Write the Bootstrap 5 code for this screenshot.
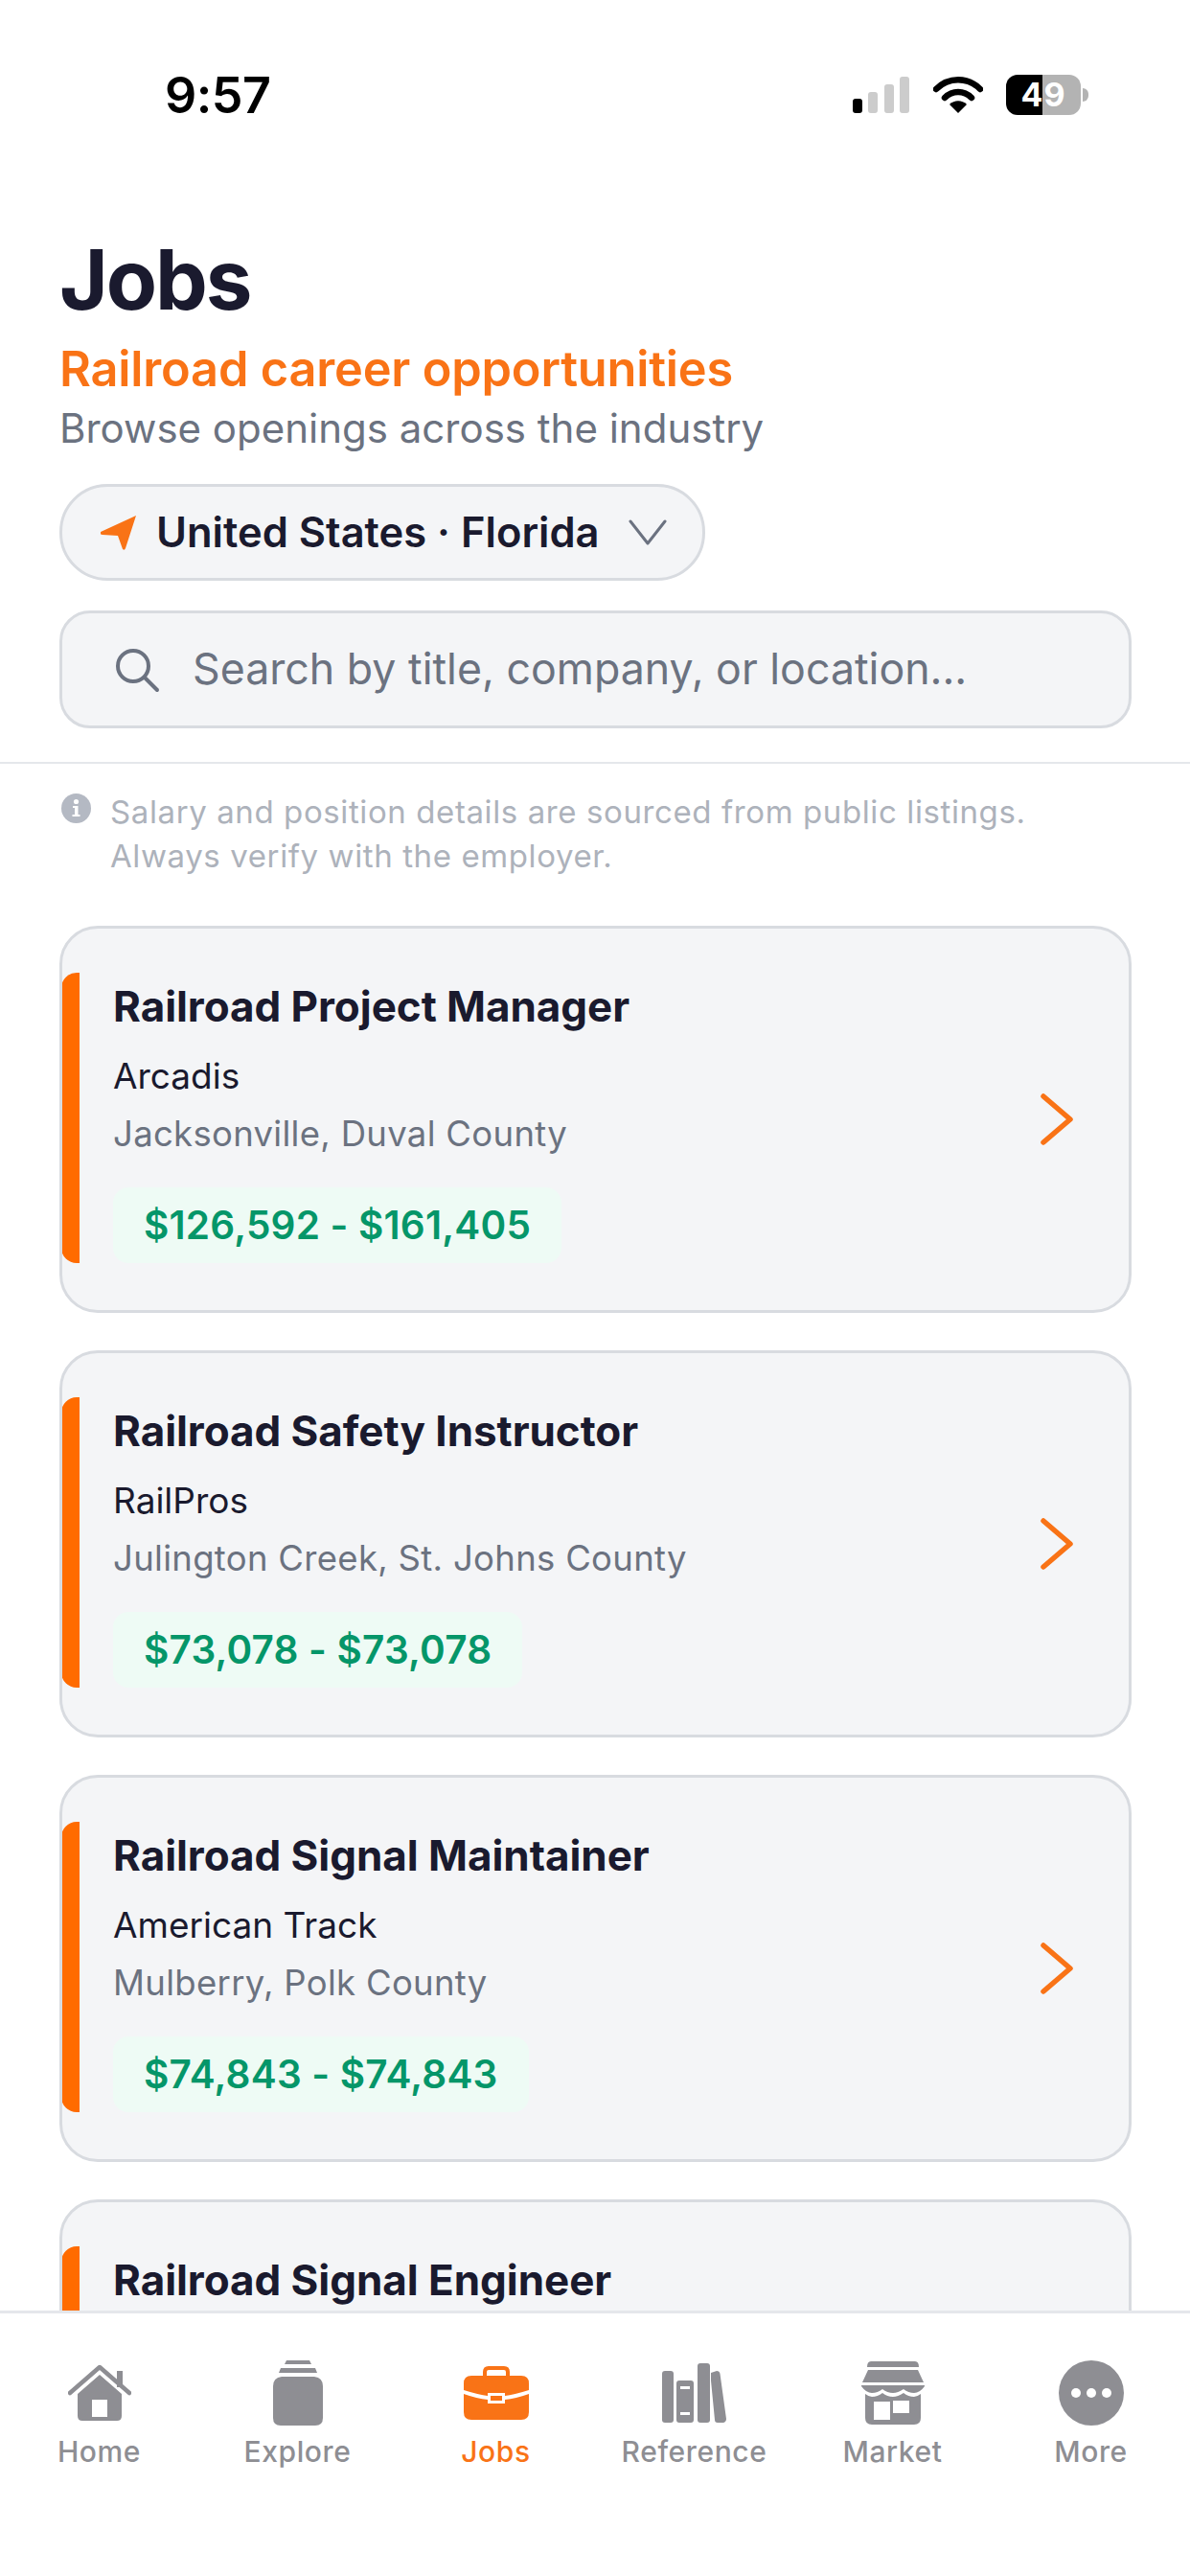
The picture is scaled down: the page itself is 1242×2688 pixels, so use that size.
<!DOCTYPE html>
<html lang="en">
<head>
  <meta charset="UTF-8" />
  <meta name="viewport" content="width=device-width, initial-scale=1.0"/>
  <title>Jobs</title>
  <link href="https://cdn.jsdelivr.net/npm/bootstrap@5.3.0/dist/css/bootstrap.min.css" rel="stylesheet">
  <style>
    body {
      background-color: #fff;
      font-family: Inter, "Liberation Sans", sans-serif;
      color: #1a1a2e;
    }
    .app-screen { width: 1242px; height: 2688px; overflow: hidden; }
    /* status bar */
    .status-row { height: 242px; padding: 72px 106px 0 172px; }
    .status-time { font-size: 52px; font-weight: 600; line-height: 56px; color: #000; letter-spacing: -0.5px; }
    .status-icons { margin-top: 6px; }
    .battery-box {
      width: 78px; height: 42px; border-radius: 12px;
      background: linear-gradient(90deg, #000 0 38px, #b3b3b3 38px 100%);
      color: #fff; font-size: 34px; font-weight: 700; line-height: 42px; text-align: center; letter-spacing: 1px;
    }
    .battery-nub { width: 6px; height: 14px; background: #b3b3b3; border-radius: 0 6px 6px 0; margin-left: 2px; }
    /* header */
    .page-head { padding: 0 61px 0 62px; border-bottom: 2px solid #e5e7eb; height: 555px; flex: none; }
    .head-title { font-size: 87px; font-weight: 700; line-height: 100px; letter-spacing: -2.1px; margin: 0; color: #1a1a2e; }
    .head-orange { font-size: 50.5px; font-weight: 600; line-height: 60px; color: #f97316; margin-top: 13px; letter-spacing: -0.2px; }
    .head-grey { font-size: 42px; line-height: 60px; color: #6b7280; margin-top: 2px; }
    .region-pill {
      width: 674px; height: 101px; margin-top: 28px; border: 3px solid #d8dbe0; border-radius: 50px;
      background: #f4f5f7; padding: 0 37px 0 40px; font-size: 43.5px; font-weight: 600; color: #1a1a2e;
    }
    .region-label { margin-left: 20px; }
    .search-box {
      height: 123px; margin-top: 31px; border: 3px solid #d8dbe0; border-radius: 32px;
      background: #f4f5f7; padding: 0 0 0 54px;
    }
    .search-input {
      background: transparent; border: 0; padding: 0; margin-left: 34px; font-size: 44.7px; color: #1a1a2e; box-shadow: none !important;
    }
    .search-input::placeholder { color: #6b7280; opacity: 1; }
    /* notice */
    .notice-row { padding: 27px 61px 0 64px; height: 169px; flex: none; font-size: 33px; line-height: 46px; color: #adb2bb; letter-spacing: 0.6px; }
    .notice-text { margin-left: 4px; }
    /* job cards */
    .job-list { padding: 0 61px 0 62px; gap: 39px; }
    .job-item {
      height: 404px; flex: none; background: #f4f5f7; border: 3px solid #d8dbe0; border-radius: 40px; overflow: hidden;
    }
    .job-accent { width: 19px; flex: none; margin: 46px 0 49px -1px; background-color: #ff6b00; border-radius: 16px 0 0 16px; }
    .job-main { padding: 56px 0 0 35px; }
    .job-title { font-size: 44px; font-weight: 700; line-height: 50px; color: #1a1a2e; margin: 0; letter-spacing: -0.05px; }
    .job-company { font-size: 37px; line-height: 46px; color: #1a1a2e; margin-top: 25px; }
    .job-place { font-size: 36.5px; line-height: 46px; color: #6b7280; margin-top: 14px; letter-spacing: 0.3px; }
    .job-pay {
      background: #eefbf5; color: #059669; font-size: 40.5px; font-weight: 600; line-height: 79px;
      padding: 0 32px; border-radius: 16px; margin-top: 33px; letter-spacing: 0.2px;
    }
    .job-go { margin-right: 58px; }
    /* tab bar */
    .tab-strip { height: 277px; flex: none; background: #fff; border-top: 3px solid #e5e7eb; padding-top: 46px; }
    .tab-cell { flex: 1 1 0; color: #8e8e93; font-size: 30px; font-weight: 500; line-height: 40px; letter-spacing: 0.6px; }
    .tab-cell.is-on { color: #f97316; }
    .tab-glyph { height: 74px; margin-bottom: 4px; }
  </style>
</head>
<body>
<div class="app-screen d-flex flex-column">

  <div class="status-row d-flex justify-content-between align-items-start flex-shrink-0">
    <div class="status-time">9:57</div>
    <div class="status-icons d-flex align-items-center">
      <svg width="60" height="38" viewBox="0 0 60 38" class="me-4">
        <rect x="0" y="23" width="10" height="15" rx="3" fill="#000"/>
        <rect x="16" y="16" width="10" height="22" rx="3" fill="#ccc"/>
        <rect x="33" y="8" width="10" height="30" rx="3" fill="#ccc"/>
        <rect x="49" y="0" width="10" height="38" rx="3" fill="#ccc"/>
      </svg>
      <svg width="52" height="38" viewBox="0 0 52 38" class="me-4">
        <path d="M3 13 C16 0 36 0 49 13" fill="none" stroke="#000" stroke-width="6.5" stroke-linecap="round"/>
        <path d="M12 22 C20 14 32 14 40 22" fill="none" stroke="#000" stroke-width="6.5" stroke-linecap="round"/>
        <path d="M17 29 C22 24 30 24 35 29 L26 38 Z" fill="#000"/>
      </svg>
      <div class="battery-box">49</div>
      <div class="battery-nub"></div>
    </div>
  </div>

  <div class="page-head">
    <h1 class="head-title">Jobs</h1>
    <div class="head-orange">Railroad career opportunities</div>
    <div class="head-grey">Browse openings across the industry</div>
    <div class="region-pill d-flex align-items-center justify-content-between">
      <svg width="38" height="36" viewBox="0 0 38 36">
        <path d="M37 0 L0 17 Q-1 20 2 20 L18 21 L23 35 Q25 37 26 34 Z" fill="#f97316"/>
      </svg>
      <span class="region-label flex-grow-1">United States · Florida</span>
      <svg width="40" height="28" viewBox="0 0 40 28">
        <path d="M2 2 L20 25 L38 2" fill="none" stroke="#6b7280" stroke-width="3" stroke-linecap="round" stroke-linejoin="round"/>
      </svg>
    </div>
    <div class="search-box d-flex align-items-center">
      <svg width="48" height="48" viewBox="0 0 48 48" class="flex-shrink-0">
        <circle cx="20" cy="20" r="16" fill="none" stroke="#6b7280" stroke-width="4"/>
        <path d="M32 32 L45 45" stroke="#6b7280" stroke-width="4" stroke-linecap="round"/>
      </svg>
      <input class="form-control search-input" type="text" placeholder="Search by title, company, or location...">
    </div>
  </div>

  <div class="notice-row d-flex">
    <svg width="31" height="31" viewBox="0 0 31 31" class="flex-shrink-0 me-3 mt-1">
      <circle cx="15.5" cy="15.5" r="15.5" fill="#b4b9c3"/>
      <circle cx="15.5" cy="8.5" r="2.6" fill="#fff"/>
      <path d="M12 13 H17.5 V22 H19.5 V24 H11.5 V22 H14 V15 H12 Z" fill="#fff"/>
    </svg>
    <div class="notice-text">Salary and position details are sourced from public listings.<br>Always verify with the employer.</div>
  </div>

  <div class="job-list d-flex flex-column flex-grow-1 overflow-hidden">
    <div class="job-item d-flex align-items-stretch">
      <div class="job-accent"></div>
      <div class="job-main flex-grow-1">
        <h2 class="job-title">Railroad Project Manager</h2>
        <div class="job-company">Arcadis</div>
        <div class="job-place">Jacksonville, Duval County</div>
        <div class="job-pay d-inline-block">$126,592 - $161,405</div>
      </div>
      <svg class="job-go align-self-center flex-shrink-0" width="34" height="54" viewBox="0 0 34 54">
        <path d="M3 3 L31 27 L3 51" fill="none" stroke="#f97316" stroke-width="5.5" stroke-linecap="round" stroke-linejoin="round"/>
      </svg>
    </div>
    <div class="job-item d-flex align-items-stretch">
      <div class="job-accent"></div>
      <div class="job-main flex-grow-1">
        <h2 class="job-title">Railroad Safety Instructor</h2>
        <div class="job-company">RailPros</div>
        <div class="job-place">Julington Creek, St. Johns County</div>
        <div class="job-pay d-inline-block">$73,078 - $73,078</div>
      </div>
      <svg class="job-go align-self-center flex-shrink-0" width="34" height="54" viewBox="0 0 34 54">
        <path d="M3 3 L31 27 L3 51" fill="none" stroke="#f97316" stroke-width="5.5" stroke-linecap="round" stroke-linejoin="round"/>
      </svg>
    </div>
    <div class="job-item d-flex align-items-stretch">
      <div class="job-accent"></div>
      <div class="job-main flex-grow-1">
        <h2 class="job-title">Railroad Signal Maintainer</h2>
        <div class="job-company">American Track</div>
        <div class="job-place">Mulberry, Polk County</div>
        <div class="job-pay d-inline-block">$74,843 - $74,843</div>
      </div>
      <svg class="job-go align-self-center flex-shrink-0" width="34" height="54" viewBox="0 0 34 54">
        <path d="M3 3 L31 27 L3 51" fill="none" stroke="#f97316" stroke-width="5.5" stroke-linecap="round" stroke-linejoin="round"/>
      </svg>
    </div>
    <div class="job-item d-flex align-items-stretch">
      <div class="job-accent"></div>
      <div class="job-main flex-grow-1">
        <h2 class="job-title">Railroad Signal Engineer</h2>
      </div>
    </div>
  </div>

  <nav class="tab-strip d-flex">
    <div class="tab-cell d-flex flex-column align-items-center">
      <div class="tab-glyph d-flex align-items-center">
        <svg width="66" height="60" viewBox="0 0 66 60">
          <path d="M10 31 L33 11 L56 31 V54 Q56 59 51 59 H15 Q10 59 10 54 Z M25 37 V55 H41 V37 Z" fill="#8e8e93" fill-rule="evenodd"/>
          <path d="M2 30 L33 3 L64 30" fill="none" stroke="#8e8e93" stroke-width="4.5" stroke-linecap="round" stroke-linejoin="round"/>
          <rect x="51" y="7" width="6" height="17" fill="#8e8e93"/>
        </svg>
      </div>
      <span>Home</span>
    </div>
    <div class="tab-cell d-flex flex-column align-items-center">
      <div class="tab-glyph d-flex align-items-center">
        <svg width="52" height="68" viewBox="0 0 52 68">
          <path d="M14 0 H38 L40 4 H12 Z" fill="#8e8e93"/>
          <path d="M8 8 H44 L46 13 H6 Z" fill="#8e8e93"/>
          <path d="M9 17 H43 Q52 18 52 27 V60 Q52 68 44 68 H8 Q0 68 0 60 V27 Q0 18 9 17 Z" fill="#8e8e93"/>
        </svg>
      </div>
      <span>Explore</span>
    </div>
    <div class="tab-cell is-on d-flex flex-column align-items-center">
      <div class="tab-glyph d-flex align-items-center">
        <svg width="68" height="56" viewBox="0 0 68 56">
          <path d="M22 11 V6 Q22 2 26 2 H42 Q46 2 46 6 V11" fill="none" stroke="#f97316" stroke-width="4"/>
          <path d="M8 10 H60 Q68 10 68 18 V25 Q52 30 43 31 V28 H25 V31 Q16 30 0 25 V18 Q0 10 8 10 Z" fill="#f97316"/>
          <path d="M0 29 Q14 34 25 35 V39 H43 V35 Q54 34 68 29 V48 Q68 56 60 56 H8 Q0 56 0 48 Z" fill="#f97316"/>
          <rect x="28" y="31" width="12" height="5" fill="#f97316"/>
        </svg>
      </div>
      <span>Jobs</span>
    </div>
    <div class="tab-cell d-flex flex-column align-items-center">
      <div class="tab-glyph d-flex align-items-center">
        <svg width="67" height="62" viewBox="0 0 67 62">
          <rect x="0" y="8" width="12" height="54" rx="3" fill="#8e8e93"/>
          <path d="M18 18 H30 Q33 18 33 21 V59 Q33 62 30 62 H18 Q15 62 15 59 V21 Q15 18 18 18 Z M19 24 V27 H29 V24 Z M19 51 V54 H29 V51 Z" fill="#8e8e93" fill-rule="evenodd"/>
          <rect x="37" y="0" width="13" height="62" rx="3" fill="#8e8e93"/>
          <path d="M51 10 L57 8 Q60 8 60.5 11 L67 58 Q67 61 64 62 L58 62 Q55 62 55 59 L51 18 Z" fill="#8e8e93"/>
        </svg>
      </div>
      <span>Reference</span>
    </div>
    <div class="tab-cell d-flex flex-column align-items-center">
      <div class="tab-glyph d-flex align-items-center">
        <svg width="66" height="66" viewBox="0 0 66 66">
          <path d="M10 0 H56 Q60 0 60 6 H6 Q6 0 10 0 Z" fill="#8e8e93"/>
          <path d="M7 9 H59 L65 22 H1 Z" fill="#8e8e93"/>
          <path d="M0 25 H66 V26 Q61 33 55 33 Q49 33 44 29 Q38 33 33 33 Q27 33 22 29 Q17 33 11 33 Q5 33 0 26 Z" fill="#8e8e93"/>
          <path d="M4 34 Q8 37 11 37 Q17 37 22 33 Q27 37 33 37 Q38 37 44 33 Q49 37 55 37 Q58 37 62 34 V59 Q62 66 55 66 H11 Q4 66 4 59 Z M13 42 V61 H30 V42 Z M33 41 V54 H50 V41 Z" fill="#8e8e93" fill-rule="evenodd"/>
        </svg>
      </div>
      <span>Market</span>
    </div>
    <div class="tab-cell d-flex flex-column align-items-center">
      <div class="tab-glyph d-flex align-items-center">
        <svg width="68" height="68" viewBox="0 0 68 68">
          <circle cx="34" cy="34" r="34" fill="#8e8e93"/>
          <circle cx="18" cy="34" r="5" fill="#fff"/>
          <circle cx="34" cy="34" r="5" fill="#fff"/>
          <circle cx="50" cy="34" r="5" fill="#fff"/>
        </svg>
      </div>
      <span>More</span>
    </div>
  </nav>
</div>
<script src="https://cdn.jsdelivr.net/npm/bootstrap@5.3.0/dist/js/bootstrap.bundle.min.js"></script>
</body>
</html>
